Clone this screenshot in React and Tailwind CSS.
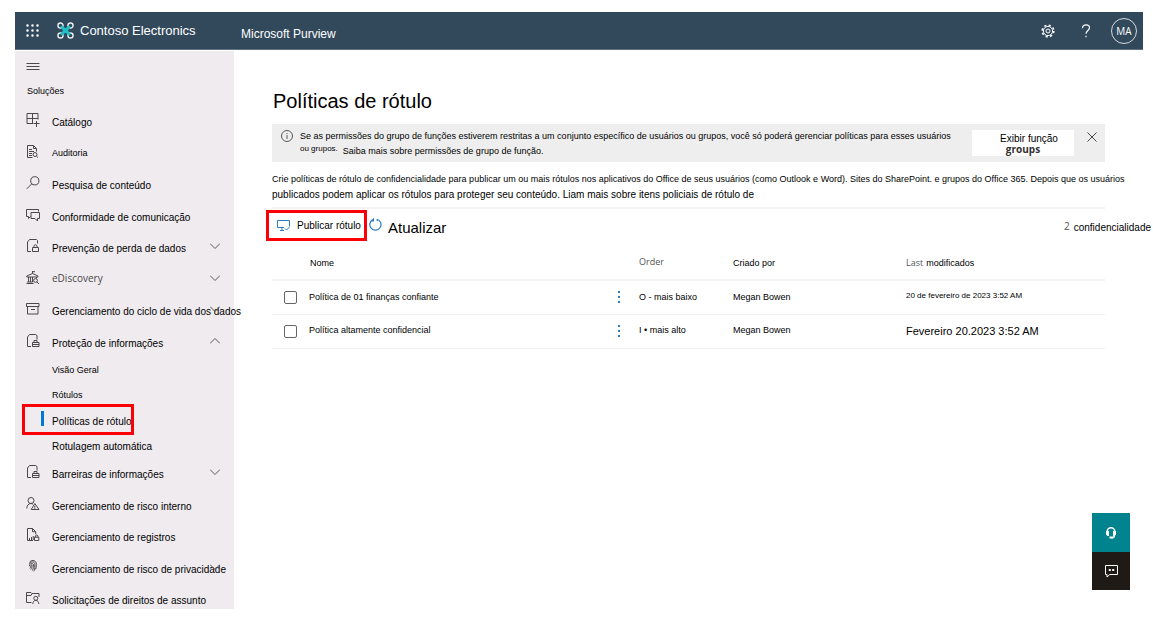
import { useState } from 'react'
import clsx from 'clsx'

function Icon({ children, className = 'size-[14px] text-[#4a484a]', viewBox = '0 0 14 14' }) {
  return (
    <svg
      viewBox={viewBox}
      className={clsx('shrink-0', className)}
      fill="none"
      stroke="currentColor"
      strokeWidth="1"
      aria-hidden="true"
    >
      {children}
    </svg>
  )
}

const icons = {
  catalog: (
    <Icon>
      <path d="M1 .5h11v6M1 .5v10h6M6.5.5v10M1 5.5h11M10.5 8v6M7.5 10.5h6" />
    </Icon>
  ),
  audit: (
    <Icon>
      <path d="M6.5 12.5h-5V.5h6l3 3v3M7.5.5v3h3M3 4.5h3M3 6.5h5M3 8.5h3M3 10.5h3" />
      <circle cx="9" cy="9.5" r="2" />
      <path d="m10.4 11 1.6 1.6" />
    </Icon>
  ),
  search: (
    <Icon>
      <circle cx="8.8" cy="4.8" r="4.1" />
      <path d="M5.8 7.8.8 12.8" />
    </Icon>
  ),
  chat: (
    <Icon>
      <path d="M2.5 10.5v-2h-2v-7h12v2M2.5 10.5l2-2" />
      <path d="M5 4.5h8.5v6h-2V13L9 10.5H5z" />
    </Icon>
  ),
  docLock: (
    <Icon>
      <path d="M5 12.5H1.5V3l2-2.5h7l1 1v3" />
      <path d="M6.5 8.5h6v4h-6zM8 8.5V7.3a1.5 1.5 0 0 1 3 0v1.2" />
    </Icon>
  ),
  docBriefcase: (
    <Icon>
      <path d="M5 12.5H1.5V3l2-2.5h6l1.5 1v4" />
      <path d="M6.5 8.5H13v4H6.5zM6.5 10.5H13M8 8.5v-2h3v2" />
    </Icon>
  ),
  court: (
    <Icon>
      <path d="M6.5 0v2.5M6.5.7H9M.8 5 6.5 2.5 12 5v1H.8zM2.5 6v5M4.5 6v5M6.5 6v5M10.5 6v1.5M.5 12.5h7M1.2 11h5.5" />
      <circle cx="9.5" cy="9.5" r="1.9" />
      <path d="m11 11 2 2" />
    </Icon>
  ),
  archive: (
    <Icon>
      <path d="M.5 1.5H13v3H.5zM1.5 4.5V12H12V4.5M5 7.5h4" />
    </Icon>
  ),
  risk: (
    <Icon>
      <circle cx="5" cy="3.5" r="3" />
      <path d="M.8 11.5c0-3 1.7-5 4.2-5 .8 0 1.4.2 2 .6M8.8 6.5l4.200 6H5.200zM8.800 8.800v2M8.800 11.200v.8" />
    </Icon>
  ),
  records: (
    <Icon>
      <path d="M7 12.5H1.5V.5h5l3.200 3.200v2.500M6.5.5v3.200h3.200M3.5 12v-2M5.5 12V9M7.200 12V8" />
      <path d="M8.5 9.200h4.300v3.300H8.500zM9.400 9.200V8a1.300 1.300 0 0 1 2.500 0v1.200" />
    </Icon>
  ),
  fingerprint: (
    <Icon>
      <path d="M3.500 2.500C4.600-.2 9.400-.2 10.200 3v3M3.300 4.300C4.500.8 8.800 1.200 8.800 4.500v3M3.300 6.300C4 2.400 7.400 2.600 7.400 5c0 2 0 3.500-1 5.500M3.800 8.300c1.200-.8 1-2.200 1.200-3 .2-.8 1-.8 1 0 0 1.600-.3 3-1.300 4.300M8.800 7.500c0 1.500-.5 2.700-1 3.800M10.200 6c0 1.200-.2 2.400-.6 3.400" />
    </Icon>
  ),
  request: (
    <Icon>
      <path d="M5.5 11.5h-5v-10H5l1 1h7V6M.5 4.500H5l1-2" />
      <circle cx="9.8" cy="7.3" r="2" />
      <path d="M6.8 13c0-2.200 1.200-3.600 3-3.600s3 1.400 3 3.600" />
    </Icon>
  ),
}

const subPages = [
  { label: 'Visão Geral', small: true },
  { label: 'Rótulos', small: true },
  { label: 'Políticas de rótulo', current: true },
  { label: 'Rotulagem automática' },
]

const solutions = [
  { label: 'Catálogo', icon: 'catalog' },
  { label: 'Auditoria', icon: 'audit', small: true },
  { label: 'Pesquisa de conteúdo', icon: 'search' },
  { label: 'Conformidade de comunicação', icon: 'chat' },
  { label: 'Prevenção de perda de dados', icon: 'docLock', expandable: true },
  { label: 'eDiscovery', icon: 'court', expandable: true, native: true },
  { label: 'Gerenciamento do ciclo de vida dos dados', icon: 'archive', expandable: true },
  { label: 'Proteção de informações', icon: 'docBriefcase', expandable: true, pages: subPages },
  { label: 'Barreiras de informações', icon: 'docBriefcase', expandable: true },
  { label: 'Gerenciamento de risco interno', icon: 'risk' },
  { label: 'Gerenciamento de registros', icon: 'records' },
  { label: 'Gerenciamento de risco de privacidade', icon: 'fingerprint', expandable: true },
  { label: 'Solicitações de direitos de assunto', icon: 'request' },
]

const policies = [
  { name: 'Política de 01 finanças confiante', order: 'O - mais baixo', author: 'Megan Bowen', modified: '20 de fevereiro de 2023 3:52 AM', dateClass: 'pb-[2px] text-[8px]' },
  { name: 'Política altamente confidencial', order: 'I • mais alto', author: 'Megan Bowen', modified: 'Fevereiro 20.2023 3:52 AM', dateClass: 'text-[11px]' },
]

function Chevron({ open }) {
  return (
    <Icon className="size-[10px] text-[#5a585a]" viewBox="0 0 10 10">
      <path d={open ? 'M0 7.5 5 2.5l5 5' : 'm0 2.5 5 5 5-5'} />
    </Icon>
  )
}

function TopBar() {
  return (
    <header className="flex h-[38px] items-center border-b border-[#5f7283] bg-[#32495c] pr-[6px] pl-[11px] text-white">
      <button type="button" aria-label="Aplicativos">
        <Icon className="size-[13px]" viewBox="0 0 13 13">
          <path d="M1.5 1.5h11M1.5 6.5h11M1.5 11.5h11" strokeWidth="2.5" strokeLinecap="round" strokeDasharray="0 5" />
        </Icon>
      </button>
      <a href="#" className="ml-[18px] flex w-[184px] items-center gap-[6px] text-[13px]">
        <Icon className="size-[17px]" viewBox="0 0 18 18">
          <g stroke="#e8eef2" strokeWidth="1.5">
            <circle cx="3.7" cy="3.7" r="2.700" />
            <circle cx="14.3" cy="3.7" r="2.700" />
            <circle cx="3.7" cy="14.3" r="2.700" />
            <circle cx="14.3" cy="14.3" r="2.700" />
          </g>
          <path d="m4.500 4.500 9 9M13.500 4.500l-9 9" stroke="#1fc0c8" strokeWidth="3" />
          <path d="M5.500 6c2 .8 5 .8 7 0-.8 2-.8 4 0 6-2-.8-5-.8-7 0 .8-2 .8-4 0-6z" fill="#1fc0c8" stroke="none" />
        </Icon>
        <span className="whitespace-nowrap">Contoso Electronics</span>
      </a>
      <span className="pt-[6px] text-[12px]">Microsoft Purview</span>
      <div className="ml-auto flex items-center">
        <button type="button" aria-label="Configurações" className="mr-[26px]">
          <Icon className="size-[14px]" viewBox="0 0 14 14">
            <circle cx="7" cy="7" r="2" />
            <circle cx="7" cy="7" r="4.600" />
            <circle cx="7" cy="7" r="5.800" strokeWidth="1.600" strokeDasharray="2.200 2.355" />
          </Icon>
        </button>
        <button type="button" aria-label="Ajuda" className="mr-[20px]">
          <Icon className="h-[14px] w-[10px]" viewBox="0 0 10 14">
            <path d="M1.5 4.200C1.5 2 3 .8 5 .8s3.500 1.200 3.500 3c0 2.500-3.500 3-3.500 6M5 11.700v1.500" strokeWidth="1.2" />
          </Icon>
        </button>
        <button type="button" aria-label="Conta" className="flex size-[26px] items-center justify-center rounded-full border border-[#d5dbe0] pt-px font-['Open_Sans',sans-serif] text-[10px]">
          MA
        </button>
      </div>
    </header>
  )
}

function SubPage({ page }) {
  return (
    <li className="relative h-[25px]">
      <a
        href="#"
        aria-current={page.current ? 'page' : undefined}
        className={clsx('flex h-full items-center pt-[5px] pl-[37px]', page.small ? 'text-[9px]' : 'text-[10px]')}
      >
        {page.label}
      </a>
      {page.current && (
        <>
          <span className="absolute top-[5px] left-[26px] h-[15px] w-[3px] bg-[#0078d4]" />
          <span className="pointer-events-none absolute -top-[2px] left-[7px] h-[31px] w-[112px] border-3 border-[#fb0007]" />
        </>
      )}
    </li>
  )
}

function Solution({ item }) {
  return (
    <li className="group">
      <a href="#" className="relative flex h-[31px] items-center pl-[11px] group-odd:h-8">
        {icons[item.icon]}
        <span
          className={clsx(
            'ml-[12px] whitespace-nowrap',
            item.native ? "pt-px font-['Open_Sans',sans-serif] text-[#4a484a]" : 'pt-[5px]',
            item.small ? 'text-[9px]' : 'text-[10px]',
          )}
        >
          {item.label}
        </span>
        {item.expandable && (
          <span className="absolute right-[14px]">
            <Chevron open={Boolean(item.pages)} />
          </span>
        )}
      </a>
      {item.pages && (
        <ul>
          {item.pages.map((page) => (
            <SubPage key={page.label} page={page} />
          ))}
        </ul>
      )}
    </li>
  )
}

function Sidebar() {
  return (
    <nav aria-label="Soluções" className="w-[219px] shrink-0 bg-[#efebef]">
      <button type="button" aria-label="Menu" className="block pt-[9px] pl-[11px]">
        <Icon className="size-[14px] text-[#4a484a]">
          <path d="M.5 3.5h13M.5 6.5h13M.5 9.5h13" />
        </Icon>
      </button>
      <h2 className="mb-[6px] pt-[11px] pl-[12px] text-[9px] leading-[13px]">Soluções</h2>
      <ul className="-mb-[5px]">
        {solutions.map((item) => (
          <Solution key={item.label} item={item} />
        ))}
      </ul>
    </nav>
  )
}

function Banner({ onClose }) {
  return (
    <div className="flex h-[38px] bg-[#eeeeee] pl-[9px]">
      <Icon className="mt-[6px] size-[12px] text-[#5a585a]" viewBox="0 0 12 12">
        <circle cx="6" cy="6" r="5.5" />
        <path d="M6 5v4M6 3v1" />
      </Icon>
      <div className="ml-[7px] pt-[5px] text-[9px] leading-[14px] whitespace-nowrap">
        <p>Se as permissões do grupo de funções estiverem restritas a um conjunto específico de usuários ou grupos, você só poderá gerenciar políticas para esses usuários</p>
        <p className="flex gap-[5px]">
          <span className="text-[8px] leading-[11px]">ou grupos.</span>
          <a href="#" className="pt-px">Saiba mais sobre permissões de grupo de função.</a>
        </p>
      </div>
      <button type="button" className="mt-[6px] mr-[13px] ml-auto flex h-[26px] w-[102px] shrink-0 flex-col items-center bg-white pt-[4px] pl-3 text-[10px] leading-[10px]">
        Exibir função
        <span className="mr-3 font-['Open_Sans',sans-serif] font-bold text-[#333]">groups</span>
      </button>
      <button type="button" aria-label="Fechar" onClick={onClose} className="mr-[8px] flex h-[26px] items-center">
        <Icon className="size-[10px] text-[#4a484a]" viewBox="0 0 10 10">
          <path d="m.5.5 9 9M9.5.5l-9 9" />
        </Icon>
      </button>
    </div>
  )
}

function Toolbar() {
  return (
    <div className="flex h-[40px] items-start border-t-2 border-[#f3f3f3]">
      <button type="button" className="-ml-[6px] mt-px flex h-[31px] w-[101px] shrink-0 items-center gap-[7px] border-3 border-[#fb0007] pl-[8px] text-[10px] whitespace-nowrap">
        <Icon className="size-[13px] text-[#2b7cc0]" viewBox="0 0 13 13">
          <path d="M7 8.5H.5v-7h12v6M3 11.5h4M5 8.5v3" />
          <path d="m8 9.500 1.500 1.500 3-3" />
        </Icon>
        Publicar rótulo
      </button>
      <button type="button" className="flex items-center gap-[6px] text-[15px]">
        <Icon className="mt-px ml-[2px] size-[13px] text-[#2b7cc0]" viewBox="0 0 13 13">
          <path d="M8 1.200a5.600 5.600 0 1 1-4.200.4M4.500.2v2.600H2M8 1.200l.5 1.800" strokeWidth="1.200" />
        </Icon>
        <span className="pt-[8px]">Atualizar</span>
      </button>
      <p className="-mr-[46px] ml-auto flex gap-1 pt-[11px] text-[10px]">
        <span className="font-['Open_Sans',sans-serif] text-[#555] leading-3">2</span>
        <span className="leading-4">confidencialidade</span>
      </p>
    </div>
  )
}

function PolicyTable() {
  const [selected, setSelected] = useState([])

  const toggle = (name) =>
    setSelected((prev) => (prev.includes(name) ? prev.filter((n) => n !== name) : [...prev, name]))

  return (
    <table className="w-full table-fixed text-left text-[9px]">
      <thead>
        <tr className="h-[33px] border-b-2 border-[#f3f3f3]">
          <th className="w-[37px]" aria-label="Selecionar" />
          <th className="pt-[2px] pl-px font-normal">Nome</th>
          <th className="w-[28px]" aria-label="Ações" />
          <th className="w-[94px] pb-[2px] font-['Open_Sans',sans-serif] font-normal text-[#555]">Order</th>
          <th className="w-[173px] pt-[2px] font-normal">Criado por</th>
          <th className="w-[199px] font-normal">
            <span className="mr-[3px] font-['Open_Sans',sans-serif] text-[#555]">Last</span>
            modificados
          </th>
        </tr>
      </thead>
      <tbody>
        {policies.map((policy) => (
          <tr key={policy.name} className="h-[34px] border-b border-[#f0f0f0]">
            <td className="pl-3">
              <input
                type="checkbox"
                aria-label={policy.name}
                checked={selected.includes(policy.name)}
                onChange={() => toggle(policy.name)}
                className="block size-[13px] appearance-none rounded-xs border border-[#666] bg-white checked:bg-[#0078d4]"
              />
            </td>
            <td>{policy.name}</td>
            <td>
              <button type="button" aria-label="Mais ações" className="ml-[7px] block">
                <Icon className="h-[12px] w-[2px] text-[#2b7cc0]" viewBox="0 0 2 12">
                  <path d="M1 0v12" strokeWidth="2" strokeDasharray="2 3" />
                </Icon>
              </button>
            </td>
            <td>{policy.order}</td>
            <td>{policy.author}</td>
            <td className={policy.dateClass}>{policy.modified}</td>
          </tr>
        ))}
      </tbody>
    </table>
  )
}

export default function App() {
  const [showBanner, setShowBanner] = useState(true)

  return (
    <div className="min-h-screen overflow-x-hidden bg-white pt-3 pr-[10px] pb-4 pl-[15px] font-['Liberation_Sans',Arial,sans-serif] text-black">
      <TopBar />
      <div className="mt-px flex">
        <Sidebar />
        <main className="min-w-0 flex-1 pt-[36px] pr-[38px] pl-[38px]">
          <h1 className="mb-[9px] pl-px text-[20px] leading-7">Políticas de rótulo</h1>
          {showBanner && <Banner onClose={() => setShowBanner(false)} />}
          <p className="mt-[9px] mb-[4px] leading-4 whitespace-nowrap">
            <span className="block text-[9px]">Crie políticas de rótulo de confidencialidade para publicar um ou mais rótulos nos aplicativos do Office de seus usuários (como Outlook e Word). Sites do SharePoint. e grupos do Office 365. Depois que os usuários</span>
            <span className="block text-[10px]">publicados podem aplicar os rótulos para proteger seu conteúdo. Liam mais sobre itens policiais de rótulo de</span>
          </p>
          <Toolbar />
          <PolicyTable />
        </main>
      </div>
      <div className="fixed right-[23px] bottom-[35px] w-[38px] text-white">
        <button type="button" aria-label="Suporte" className="flex h-[39px] w-full items-center justify-center bg-[#00838c]">
          <Icon className="size-[12px]" viewBox="0 0 12 12">
            <path d="M2.200 5V4.500a3.800 3.800 0 0 1 7.600 0V5M9.500 8.500c0 1.500-1.500 2.300-3 2.300" strokeWidth="1.500" />
            <path d="M1 4h3v5H2.500L1 7.500zM11 4H8v5h1.500L11 7.500zM4.500 9.500H8v2H4.500z" fill="currentColor" stroke="none" />
          </Icon>
        </button>
        <button type="button" aria-label="Comentários" className="flex h-[38px] w-full items-center justify-center bg-[#201a17]">
          <Icon className="size-[13px]" viewBox="0 0 13 13">
            <path d="M.5.5h12v9H4.800L2 12V9.500H.5z" />
            <path d="M3.800 5h2M7.200 5h2" strokeWidth="2" />
          </Icon>
        </button>
      </div>
    </div>
  )
}
